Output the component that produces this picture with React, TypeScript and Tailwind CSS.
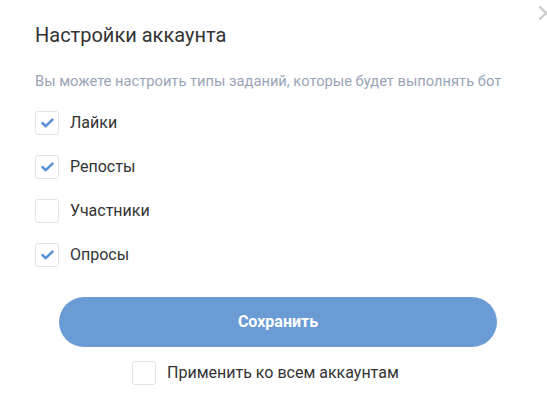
import React, { useState } from "react";

const TASKS = [
  { id: "likes", label: "Лайки", checked: true },
  { id: "reposts", label: "Репосты", checked: true },
  { id: "members", label: "Участники", checked: false },
  { id: "polls", label: "Опросы", checked: true },
];

function Checkbox({ checked, onChange }: { checked: boolean; onChange: () => void }) {
  return (
    <button
      type="button"
      onClick={onChange}
      className="w-6 h-6 shrink-0 rounded-[3px] border border-[#e1e4ea] bg-white flex items-center justify-center"
    >
      {checked && (
        <svg width="13" height="10" viewBox="0 0 13 10" fill="none">
          <path d="M1.6 5.2 L4.8 8.2 L11.4 1.6" stroke="#5b91d5" strokeWidth="2.6" strokeLinecap="round" strokeLinejoin="round" />
        </svg>
      )}
    </button>
  );
}

export default function App() {
  const [tasks, setTasks] = useState(TASKS);
  const [applyAll, setApplyAll] = useState(false);

  const toggle = (id: string) =>
    setTasks((prev) => prev.map((t) => (t.id === id ? { ...t, checked: !t.checked } : t)));

  return (
    <div className="relative w-[547px] h-[403px] overflow-hidden bg-white font-['Roboto',_'Liberation_Sans',_sans-serif]">
      {/* close button, clipped by the window edge */}
      <button type="button" className="absolute left-[539px] top-[6px]">
        <svg width="14" height="14" viewBox="0 0 14 14" fill="none">
          <path d="M1 1 L13 13 M13 1 L1 13" stroke="#c9c9c9" strokeWidth="2.2" strokeLinecap="round" />
        </svg>
      </button>

      <div className="pl-[35px] pt-[23px]">
        <h1 className="text-[20px] leading-6 text-[#333333]">Настройки аккаунта</h1>
        <p className="mt-[26px] text-[14.7px] leading-4 text-[#9aa4b7]">
          Вы можете настроить типы заданий, которые будет выполнять бот
        </p>

        <div className="mt-[22px] flex flex-col gap-5">
          {tasks.map((t) => (
            <label key={t.id} className="flex items-center gap-[11px] h-6 cursor-pointer">
              <Checkbox checked={t.checked} onChange={() => toggle(t.id)} />
              <span className="text-[16px] text-[#333333]">{t.label}</span>
            </label>
          ))}
        </div>
      </div>

      <button
        type="button"
        className="ml-[59px] mt-[30px] w-[438px] h-[50px] rounded-full bg-[#6b9bd4] text-white text-[16px] font-bold"
      >
        Сохранить
      </button>

      <label className="ml-[132px] mt-[14px] flex items-center gap-[11px] h-6 cursor-pointer">
        <Checkbox checked={applyAll} onChange={() => setApplyAll(!applyAll)} />
        <span className="text-[16px] text-[#333333]">Применить ко всем аккаунтам</span>
      </label>
    </div>
  );
}
